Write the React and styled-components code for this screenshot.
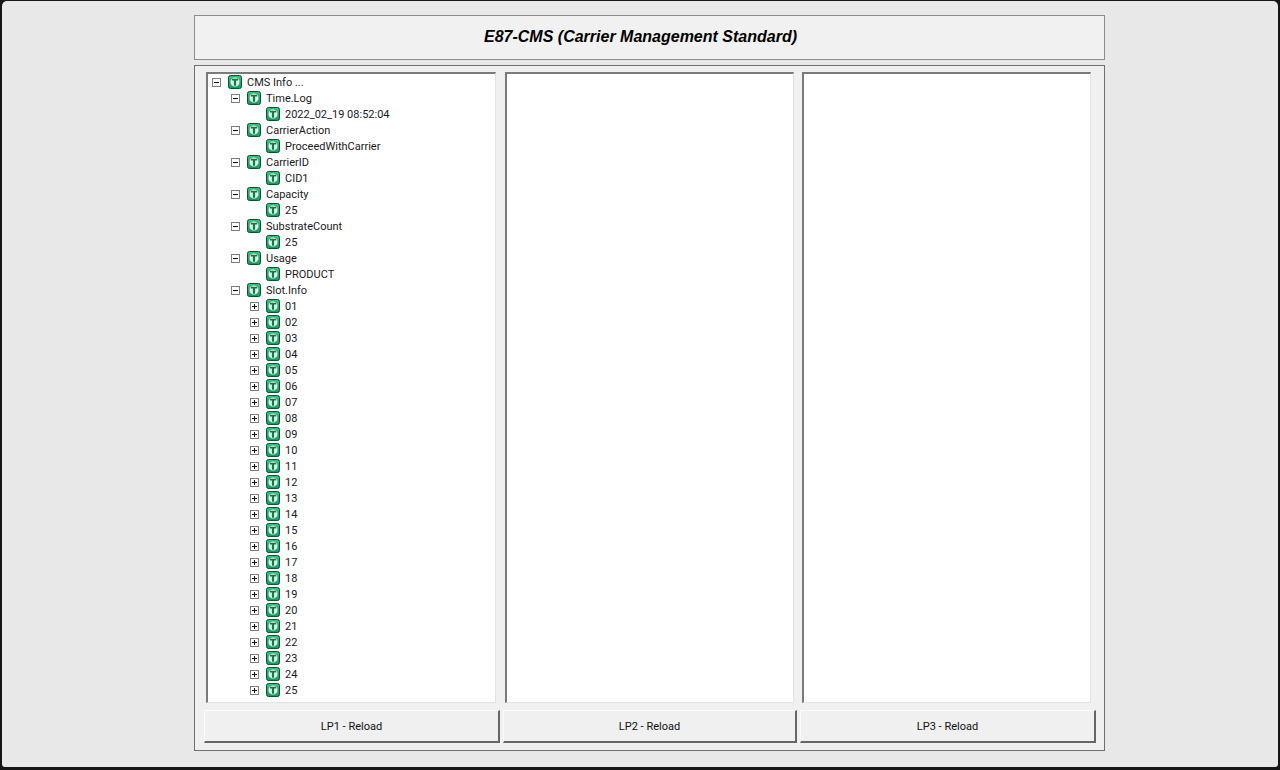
import React from 'react';
import styled, { createGlobalStyle } from 'styled-components';

const GlobalStyle = createGlobalStyle`
  html, body {
    margin: 0;
    padding: 0;
    background: #161616;
  }
`;

const Frame = styled.div`
  width: 1280px;
  height: 770px;
  box-sizing: border-box;
  padding: 1px 2px 3px 2px;
  background: #161616;
  overflow: hidden;
  font-family: Roboto, "Liberation Sans", sans-serif;
  color: #111;
`;

const Desk = styled.div`
  height: 100%;
  box-sizing: border-box;
  padding: 14px 0 0 192px;
  border-radius: 5px 5px 3px 3px;
  background-color: #e9e9e9;
  background-image: repeating-conic-gradient(#ebebeb 0% 25%, #e6e6e6 0% 50%);
  background-size: 2px 2px;
`;

const TitleBar = styled.div`
  width: 911px;
  height: 45px;
  box-sizing: border-box;
  border: 1px solid #8c8c8c;
  background: #f1f1f1;
  display: flex;
  align-items: center;
  justify-content: center;
  padding: 0 18px 2px 0;
  font-family: "Liberation Sans", Arial, sans-serif;
  font-size: 16px;
  font-weight: bold;
  font-style: italic;
  color: #000;
`;

const MainBox = styled.div`
  width: 911px;
  height: 686px;
  margin-top: 5px;
  box-sizing: border-box;
  border: 1px solid #6f6f6f;
  background: #f0f0f0;
  padding: 6px 0 0 9px;
`;

const Panels = styled.div`
  display: flex;
  gap: 9px;
  padding-left: 2px;
`;

const Panel = styled.div`
  width: ${p => p.$width}px;
  margin-right: ${p => p.$trim || 0}px;
  height: 631px;
  box-sizing: border-box;
  flex: none;
  border-top: 2px solid #7a7a7a;
  border-left: 2px solid #7a7a7a;
  border-right: 1px solid #e4e4e4;
  border-bottom: 1px solid #e4e4e4;
  background: #fff;
  padding: 0 0 0 4px;
  overflow: hidden;
`;

const Buttons = styled.div`
  display: flex;
  gap: 3px;
  margin-top: 7px;
`;

const ReloadButton = styled.button`
  width: ${p => p.$width}px;
  height: 33px;
  box-sizing: border-box;
  flex: none;
  padding: 0;
  border-top: 1px solid #fbfbfb;
  border-left: 1px solid #fbfbfb;
  border-right: 2px solid #666;
  border-bottom: 2px solid #666;
  background: #f0f0f0;
  font-family: Roboto, "Liberation Sans", sans-serif;
  font-size: 11px;
  color: #111;
`;

const Row = styled.div`
  height: 16px;
  display: flex;
  align-items: center;
  padding-left: ${p => p.$depth * 19}px;
`;

const ToggleSlot = styled.span`
  width: 15px;
  height: 16px;
  flex: none;
  display: flex;
  align-items: center;
  margin-right: 1px;
`;

const ToggleBox = styled.span`
  width: 9px;
  height: 9px;
  box-sizing: border-box;
  border: 1px solid #7e7e7e;
  background: #fff;
  position: relative;

  &::before {
    content: "";
    position: absolute;
    left: 1px;
    top: 3px;
    width: 5px;
    height: 1px;
    background: #111;
  }

  &::after {
    content: "";
    display: ${p => (p.$open ? 'none' : 'block')};
    position: absolute;
    left: 3px;
    top: 1px;
    width: 1px;
    height: 5px;
    background: #111;
  }
`;

const Label = styled.span`
  margin: 2px 0 0 5px;
  font-size: 11px;
  line-height: 16px;
  white-space: nowrap;
  color: #1a1a1a;
`;

const NodeIcon = () => (
  <svg width="14" height="14" viewBox="0 0 14 14" style={{ flex: 'none' }}>
    <defs>
      <linearGradient id="nodeFill" x1="0" y1="0" x2="0" y2="1">
        <stop offset="0" stopColor="#35c982" />
        <stop offset="1" stopColor="#0a9f57" />
      </linearGradient>
    </defs>
    <rect x="0.5" y="0.5" width="13" height="13" rx="2" fill="url(#nodeFill)" stroke="#0a5232" />
    <circle cx="7" cy="7" r="4.9" fill="#dff7ea" stroke="#0c7a49" strokeWidth="0.5" />
    <path d="M3.9 3.8h6.2v1.8H8.1v5.2H5.9V5.6H3.9z" fill="#0c7a49" />
  </svg>
);

const Node = ({ depth, open, text }) => (
  <Row $depth={depth}>
    <ToggleSlot>{open !== undefined && <ToggleBox $open={open} />}</ToggleSlot>
    <NodeIcon />
    <Label>{text}</Label>
  </Row>
);

const fields = [
  ['Time.Log', '2022_02_19 08:52:04'],
  ['CarrierAction', 'ProceedWithCarrier'],
  ['CarrierID', 'CID1'],
  ['Capacity', '25'],
  ['SubstrateCount', '25'],
  ['Usage', 'PRODUCT'],
];

const slots = Array.from({ length: 25 }, (_, i) => String(i + 1).padStart(2, '0'));

export default function App() {
  return (
    <Frame>
      <GlobalStyle />
      <Desk>
        <TitleBar>E87-CMS (Carrier Management Standard)</TitleBar>
        <MainBox>
          <Panels>
            <Panel $width={290}>
              <Node depth={0} open text="CMS Info ..." />
              {fields.map(([name, value]) => (
                <React.Fragment key={name}>
                  <Node depth={1} open text={name} />
                  <Node depth={2} text={value} />
                </React.Fragment>
              ))}
              <Node depth={1} open text="Slot.Info" />
              {slots.map(s => (
                <Node key={s} depth={2} open={false} text={s} />
              ))}
            </Panel>
            <Panel $width={289} $trim={-1} />
            <Panel $width={289} />
          </Panels>
          <Buttons>
            <ReloadButton $width={296}>LP1 - Reload</ReloadButton>
            <ReloadButton $width={294}>LP2 - Reload</ReloadButton>
            <ReloadButton $width={296}>LP3 - Reload</ReloadButton>
          </Buttons>
        </MainBox>
      </Desk>
    </Frame>
  );
}
